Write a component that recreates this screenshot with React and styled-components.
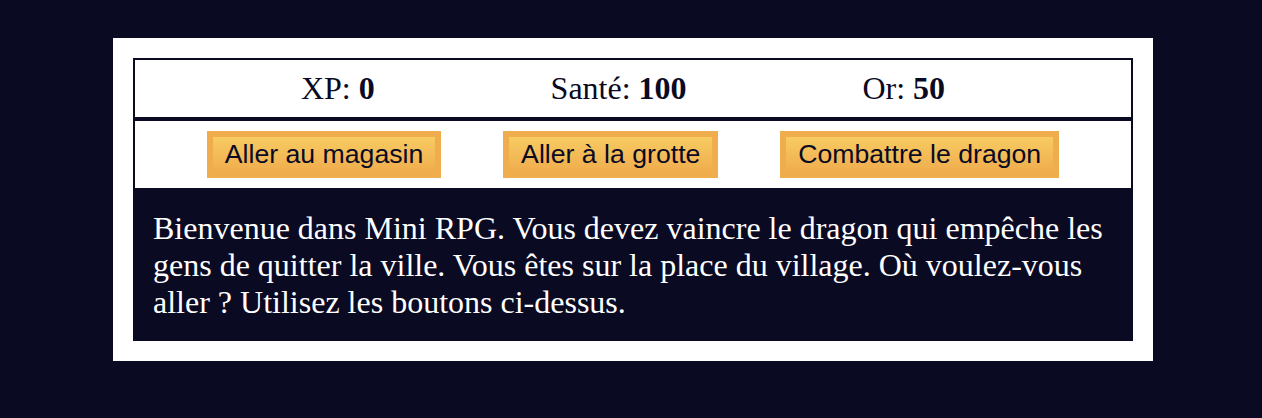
import React from "react";
import styled, { createGlobalStyle } from "styled-components";

const Global = createGlobalStyle`
  html, body {
    background-color: #0a0a23;
  }
  body {
    margin: 8px 4px 0 8px;
    font-family: "Liberation Serif", "Times New Roman", serif;
  }
`;

const Game = styled.div`
  max-width: 1000px;
  background-color: #ffffff;
  color: #ffffff;
  margin: 30px auto 0;
  padding: 20px;
`;

const Panel = styled.div`
  display: flex;
  justify-content: space-evenly;
  align-items: center;
  border: 2px solid #0a0a23;
  padding: 10px;
  color: #0a0a23;
  font-size: 32px;
  line-height: normal;
`;

const Stat = styled.span`
  padding-right: 20px;
`;

const Button = styled.button`
  cursor: pointer;
  font-family: "Liberation Sans", Arial, sans-serif;
  font-size: 26.67px;
  line-height: normal;
  padding: 2px 12px;
  margin: 0;
  color: #0a0a23;
  background-color: #f0ad4e;
  background-image: linear-gradient(#f7cb62, #f0ad4e);
  border: 6px solid #f0ad4e;
  border-radius: 0;
`;

const Text = styled.div`
  background-color: #0a0a23;
  color: #ffffff;
  padding: 20px;
  font-size: 32px;
  line-height: normal;
`;

const stats = [
  { label: "XP", value: 0 },
  { label: "Santé", value: 100 },
  { label: "Or", value: 50 },
];

const actions = ["Aller au magasin", "Aller à la grotte", "Combattre le dragon"];

export default function App() {
  return (
    <>
      <Global />
      <Game>
        <Panel>
          {stats.map((s) => (
            <Stat key={s.label}>
              {s.label}: <strong>{s.value}</strong>
            </Stat>
          ))}
        </Panel>
        <Panel>
          {actions.map((a) => (
            <Button key={a}>{a}</Button>
          ))}
        </Panel>
        <Text>
          Bienvenue dans Mini RPG. Vous devez vaincre le dragon qui empêche les
          gens de quitter la ville. Vous êtes sur la place du village. Où
          voulez-vous aller ? Utilisez les boutons ci-dessus.
        </Text>
      </Game>
    </>
  );
}
